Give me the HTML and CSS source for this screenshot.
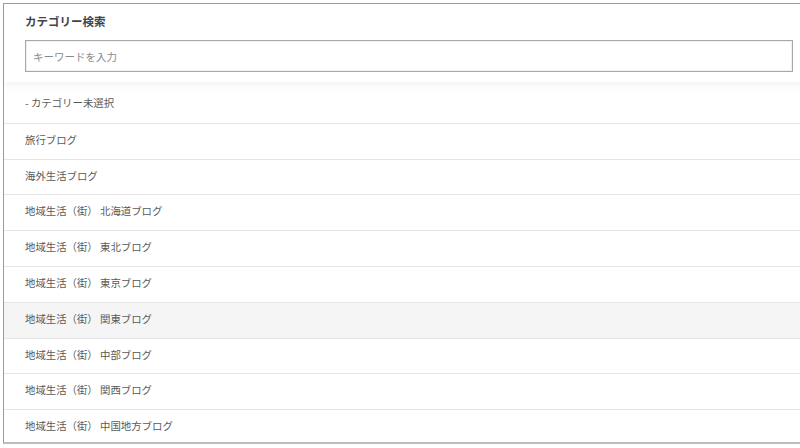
FILE: index.html
```html
<!DOCTYPE html>
<html>
<head>
  <meta charset="UTF-8">
  <title>カテゴリー検索</title>
  <link rel="stylesheet" href="styles.css">
</head>
<body>

<div class="panel">
  <div class="panel-head">
    <div class="panel-title">カテゴリー検索</div>
    <input class="search" type="text" placeholder="キーワードを入力">
  </div>

  <ul class="cat-list">
    <li>- カテゴリー未選択</li>
    <li>旅行ブログ</li>
    <li>海外生活ブログ</li>
    <li>地域生活（街） 北海道ブログ</li>
    <li>地域生活（街） 東北ブログ</li>
    <li>地域生活（街） 東京ブログ</li>
    <li class="hover">地域生活（街） 関東ブログ</li>
    <li>地域生活（街） 中部ブログ</li>
    <li>地域生活（街） 関西ブログ</li>
    <li>地域生活（街） 中国地方ブログ</li>
  </ul>
</div>

</body>
</html>
```

FILE: styles.css
```css
html, body {
  margin: 0;
  overflow: hidden;
}

body {
  padding: 3px;
  background: #fff;
  font-family: "Noto Sans CJK JP", "Noto Sans", sans-serif;
  color: #5a5a5a;
}

.panel {
  width: 810px;
  border: 1px solid #9c9c9c;
  border-bottom: 2px solid #bdbdbd;
  background: #fff;
}

.panel-head {
  position: relative;
  z-index: 1;
  padding: 9px 21px 10px 21px;
  box-shadow: 0 4px 7px rgba(0, 0, 0, 0.045);
  background: #fff;
}

.panel-title {
  font-size: 11.5px;
  line-height: 16px;
  font-weight: bold;
  color: #444;
  margin-bottom: 11px;
}

.search {
  display: block;
  box-sizing: border-box;
  width: 100%;
  height: 32px;
  margin: 0;
  padding: 0 7px;
  border: 1px solid #a8a8a8;
  box-shadow: inset 0 0 0 1px #f0f0f0;
  font-family: inherit;
  font-size: 10.5px;
  color: #555;
  outline: none;
}

.search::placeholder {
  color: #8a8a8a;
}

.cat-list {
  list-style: none;
  margin: 0;
  padding: 0;
}

.cat-list li {
  padding: 9px 21px 11px 21px;
  line-height: 14.8px;
  font-size: 10.4px;
  border-top: 1px solid #e6e6e6;
}

.cat-list li:first-child {
  border-top: none;
  padding-top: 14px;
  padding-bottom: 12px;
}

.cat-list li:last-child {
  padding-bottom: 8px;
}

.cat-list li.hover {
  background: #f5f5f5;
}
```
